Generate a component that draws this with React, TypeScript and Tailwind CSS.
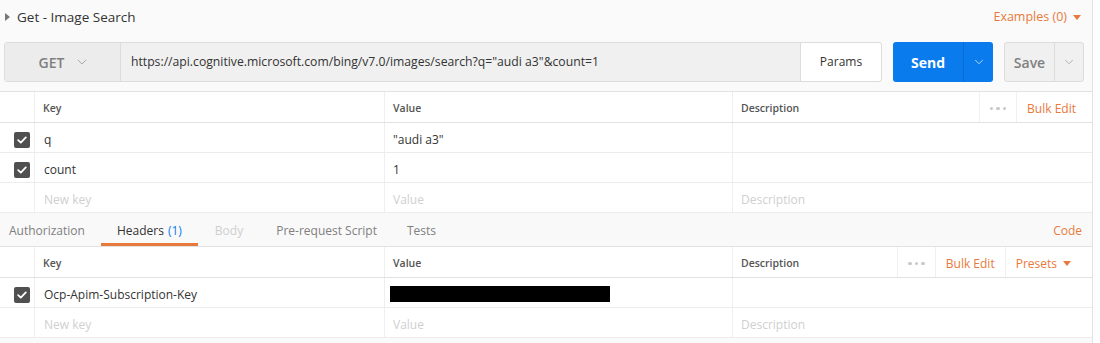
import { ChevronDown } from "lucide-react";

const ORANGE = "text-[#e8793c]";

function Check() {
  return (
    <span className="flex h-4 w-4 items-center justify-center rounded-[2px] bg-[#505050]">
      <svg width="10" height="8" viewBox="0 0 10 8" fill="none">
        <path d="M1.2 4.2 L3.8 6.6 L8.8 1.4" stroke="#fff" strokeWidth="1.8" strokeLinecap="round" strokeLinejoin="round" />
      </svg>
    </span>
  );
}

function Dots() {
  return (
    <span className="flex gap-[3px]">
      <span className="h-[3.5px] w-[3.5px] rounded-full bg-[#c8c8c8]" />
      <span className="h-[3.5px] w-[3.5px] rounded-full bg-[#c8c8c8]" />
      <span className="h-[3.5px] w-[3.5px] rounded-full bg-[#c8c8c8]" />
    </span>
  );
}

function Caret() {
  return <span className="ml-[6px] inline-block h-0 w-0 border-x-[4px] border-t-[5px] border-x-transparent border-t-[#e8793c]" />;
}

const cols = "grid grid-cols-[35px_350px_348px_1fr]";
const cell = "flex items-center border-r border-[#efefef]";

function HeaderRow({ presets }: { presets?: boolean }) {
  return (
    <div className={`${cols} h-[31px] border-b border-[#e2e2e2] bg-white text-[10.5px] font-semibold text-[#555]`}>
      <div className={cell} />
      <div className={`${cell} pl-[8px] pt-[3px]`}>Key</div>
      <div className={`${cell} pl-[8px] pt-[3px]`}>Value</div>
      <div className="flex items-center pl-[8px]">
        <span className="flex-1 pt-[3px]">Description</span>
        <span className="flex h-full items-center border-l border-[#f0f0f0] px-[10px] pt-[3px]">
          <Dots />
        </span>
        {presets ? (
          <>
            <span className={`flex h-full items-center border-l border-[#f0f0f0] px-[10px] pt-[3px] text-[12px] font-normal ${ORANGE}`}>Bulk Edit</span>
            <span className={`flex h-full items-center border-l border-[#f0f0f0] pl-[10px] pr-[21px] pt-[3px] text-[12px] font-normal ${ORANGE}`}>
              Presets
              <Caret />
            </span>
          </>
        ) : (
          <span className={`flex h-full items-center border-l border-[#f0f0f0] pl-[10px] pr-[16px] pt-[3px] text-[12px] font-normal ${ORANGE}`}>Bulk Edit</span>
        )}
      </div>
    </div>
  );
}

function Row({ k, v, checked, placeholder }: { k: React.ReactNode; v: React.ReactNode; checked?: boolean; placeholder?: boolean }) {
  const tone = placeholder ? "text-[#cfcfcf]" : "text-[#333]";
  return (
    <div className={`${cols} h-[30px] border-b border-[#ececec] bg-white text-[12px] ${tone}`}>
      <div className={`${cell} justify-end pr-[4px] pt-[4px]`}>{checked && <Check />}</div>
      <div className={`${cell} pl-[9px] pt-[4px]`}>{k}</div>
      <div className={`${cell} pl-[8px] pt-[4px]`}>{v}</div>
      <div className="flex items-center pl-[8px] pt-[4px]">{placeholder ? "Description" : ""}</div>
    </div>
  );
}

export default function App() {
  return (
    <div className="h-[343px] w-[1100px] overflow-hidden bg-white font-['Open_Sans',sans-serif]">
      <div className="h-full w-[1093px] border-r border-[#e2e2e2] bg-[#fafafa]">
        {/* title */}
        <div className="flex h-[34px] items-center pl-[5px] pr-[11px]">
          <span className="h-0 w-0 border-y-[4px] border-l-[5px] border-y-transparent border-l-[#777]" />
          <span className="ml-[7px] text-[13.5px] text-[#333]">Get - Image Search</span>
          <span className={`ml-auto flex items-center text-[12.5px] ${ORANGE}`}>
            Examples (0)
            <Caret />
          </span>
        </div>

        {/* url bar */}
        <div className="flex h-[58px] items-start border-b border-[#e2e2e2] pl-[4px] pt-[8px]">
          <div className="flex h-[40px] w-[878px] rounded-[3px] border border-[#dcdcdc] bg-[#f0f0f0]">
            <div className="flex w-[116px] items-center justify-center gap-[10px] border-r border-[#dcdcdc] bg-[#ececec] pl-[4px] text-[14px] font-semibold text-[#808080]">
              GET
              <ChevronDown size={16} strokeWidth={1.5} className="text-[#aaa]" />
            </div>
            <div className="flex flex-1 items-center pl-[10px] text-[12.2px] text-[#333]">
              https://api.cognitive.microsoft.com/bing/v7.0/images/search?q="audi a3"&amp;count=1
            </div>
            <div className="flex w-[81px] items-center justify-center rounded-r-[3px] border-l border-[#dcdcdc] bg-white text-[12px] text-[#333]">
              Params
            </div>
          </div>
          <div className="ml-[11px] flex h-[40px] w-[100px] rounded-[3px] bg-[#097bed] text-white">
            <div className="flex w-[70px] items-center justify-center text-[14px] font-bold">Send</div>
            <div className="flex flex-1 items-center justify-center border-l border-[#0a6bd0]">
              <ChevronDown size={14} strokeWidth={1.5} className="text-[#cfe4fb]" />
            </div>
          </div>
          <div className="ml-[11px] flex h-[40px] w-[80px] rounded-[3px] border border-[#dcdcdc] bg-[#f0f0f0]">
            <div className="flex w-[49px] items-center justify-center text-[14px] font-semibold text-[#808080]">Save</div>
            <div className="flex flex-1 items-center justify-center border-l border-[#dcdcdc]">
              <ChevronDown size={14} strokeWidth={1.5} className="text-[#aaa]" />
            </div>
          </div>
        </div>

        {/* params table */}
        <HeaderRow />
        <Row checked k="q" v={'"audi a3"'} />
        <Row checked k="count" v="1" />
        <Row placeholder k="New key" v="Value" />

        {/* tabs */}
        <div className="flex h-[34px] items-stretch border-b border-[#e2e2e2] bg-[#f9f9f9] text-[12px] text-[#808080]">
          <div className="flex items-center pl-[9px] pr-[16px] pt-[3px]">Authorization</div>
          <div className="flex items-center border-b-[3px] border-[#e8793c] px-[16px] pt-[6px] text-[#333]">
            Headers <span className="ml-[4px] text-[#097bed]">(1)</span>
          </div>
          <div className="flex items-center px-[17px] pt-[3px] text-[#cfcfcf]">Body</div>
          <div className="flex items-center px-[16px] pt-[3px]">Pre-request Script</div>
          <div className="flex items-center px-[14px] pt-[3px]">Tests</div>
          <div className={`ml-auto flex items-center pr-[10px] pt-[3px] ${ORANGE}`}>Code</div>
        </div>

        {/* headers table */}
        <HeaderRow presets />
        <Row checked k="Ocp-Apim-Subscription-Key" v={<span className="-ml-[3px] -mt-[2px] h-[16px] w-[220px] bg-black" />} />
        <Row placeholder k="New key" v="Value" />
      </div>
    </div>
  );
}
